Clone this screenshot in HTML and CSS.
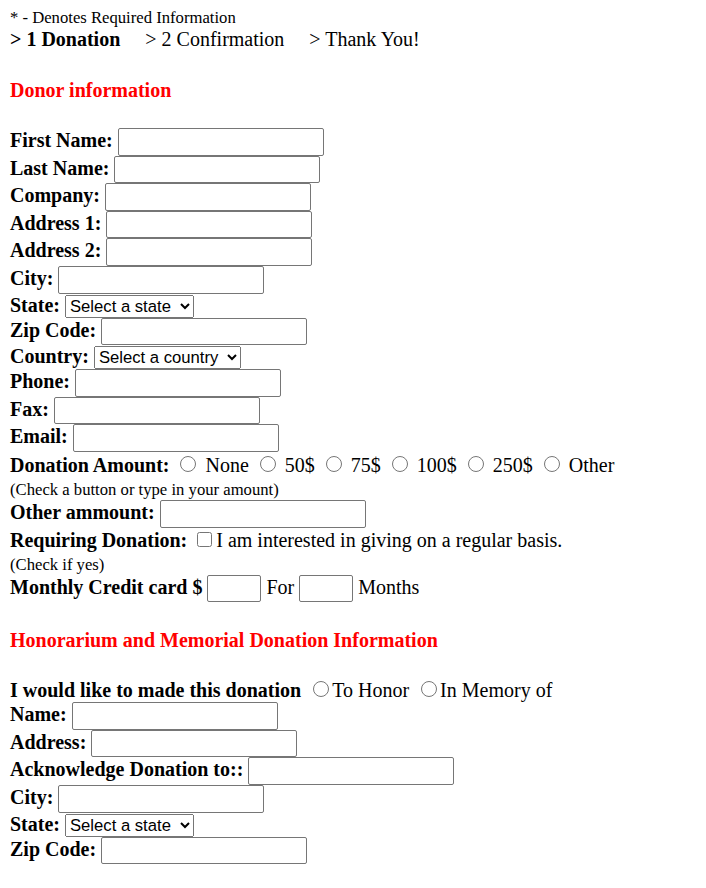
FILE: index.html
```html
<!DOCTYPE html>
<html lang="en">
<head>
<meta charset="utf-8">
<title>Donation</title>
<link rel="stylesheet" href="styles.css">
</head>
<body>
<form class="donation">
  <p class="note">* - Denotes Required Information</p>
  <div class="steps"><b class="step step-current">&gt; 1 Donation</b><span class="step">&gt; 2 Confirmation</span><span class="step">&gt; Thank You!</span></div>

  <h2 class="section-title">Donor information</h2>

  <div class="row"><b>First Name:</b> <input class="txt" type="text"></div>
  <div class="row"><b>Last Name:</b> <input class="txt" type="text"></div>
  <div class="row"><b>Company:</b> <input class="txt" type="text"></div>
  <div class="row"><b>Address 1:</b> <input class="txt" type="text"></div>
  <div class="row"><b>Address 2:</b> <input class="txt" type="text"></div>
  <div class="row"><b>City:</b> <input class="txt" type="text"></div>
  <div class="row"><b>State:</b> <select class="sel sel-state"><option>Select a state</option></select></div>
  <div class="row"><b>Zip Code:</b> <input class="txt" type="text"></div>
  <div class="row"><b>Country:</b> <select class="sel sel-country"><option>Select a country</option></select></div>
  <div class="row"><b>Phone:</b> <input class="txt" type="text"></div>
  <div class="row"><b>Fax:</b> <input class="txt" type="text"></div>
  <div class="row"><b>Email:</b> <input class="txt" type="text"></div>
  <div class="row"><b>Donation Amount:</b> <input class="radio" type="radio" name="amt"> None <input class="radio" type="radio" name="amt"> 50$ <input class="radio" type="radio" name="amt"> 75$ <input class="radio" type="radio" name="amt"> 100$ <input class="radio" type="radio" name="amt"> 250$ <input class="radio" type="radio" name="amt"> Other</div>
  <div class="row"><small class="hint">(Check a button or type in your amount)</small></div>
  <div class="row"><b>Other ammount:</b> <input class="txt" type="text"></div>
  <div class="row"><b>Requiring Donation:</b> <input class="chk" type="checkbox">I am interested in giving on a regular basis.</div>
  <div class="row"><small class="hint">(Check if yes)</small></div>
  <div class="row"><b>Monthly Credit card $</b> <input class="txt txt-short" type="text"> For <input class="txt txt-short" type="text"> Months</div>

  <h2 class="section-title section-title-second">Honorarium and Memorial Donation Information</h2>

  <div class="row"><b>I would like to made this donation</b> <input class="radio radio-tight" type="radio" name="kind">To Honor <input class="radio radio-tight" type="radio" name="kind">In Memory of</div>
  <div class="row"><b>Name:</b> <input class="txt" type="text"></div>
  <div class="row"><b>Address:</b> <input class="txt" type="text"></div>
  <div class="row"><b>Acknowledge Donation to::</b> <input class="txt" type="text"></div>
  <div class="row"><b>City:</b> <input class="txt" type="text"></div>
  <div class="row"><b>State:</b> <select class="sel sel-state"><option>Select a state</option></select></div>
  <div class="row"><b>Zip Code:</b> <input class="txt" type="text"></div>
</form>
</body>
</html>
```

FILE: styles.css
```css
html {
  background: #fff;
}

body {
  margin: 8px 10px;
  font-family: "Liberation Serif", "Times New Roman", serif;
  font-size: 20px;
  color: #000;
}

.donation {
  margin: 0;
}

.note {
  margin: 0;
  font-size: 16.67px;
}

.steps {
  display: flex;
  white-space: nowrap;
}

.step {
  margin-right: 25px;
  font-weight: normal;
}

.step-current {
  font-weight: bold;
}

.section-title {
  margin: 28px 0 26px;
  font-size: 20px;
  font-weight: bold;
  color: #f00;
}

.section-title-second {
  margin-top: 27px;
  margin-bottom: 27px;
}

.row {
  white-space: nowrap;
}

.hint {
  font-size: 16.67px;
}

.txt {
  box-sizing: border-box;
  width: 206px;
  height: 27.6px;
  margin: 0;
  padding: 1px 2px;
  border: 1px solid #767676;
  border-radius: 2px;
  background: #fff;
  font-family: "Liberation Sans", Arial, sans-serif;
  font-size: 16.67px;
  vertical-align: baseline;
}

.txt-short {
  width: 54px;
}

.sel {
  box-sizing: border-box;
  height: 23px;
  margin: 0;
  font-family: "Liberation Sans", Arial, sans-serif;
  font-size: 16.67px;
  color: #000;
  vertical-align: baseline;
}

.sel-state {
  width: 129px;
}

.sel-country {
  width: 147px;
}

.radio {
  width: 16px;
  height: 16px;
  margin: 4px 4px 0 6px;
  vertical-align: baseline;
}

.radio-tight {
  margin: 0 3.5px 0 6.5px;
}

.chk {
  width: 15px;
  height: 15px;
  margin: 4px 4px 0 5px;
  vertical-align: baseline;
}
```
